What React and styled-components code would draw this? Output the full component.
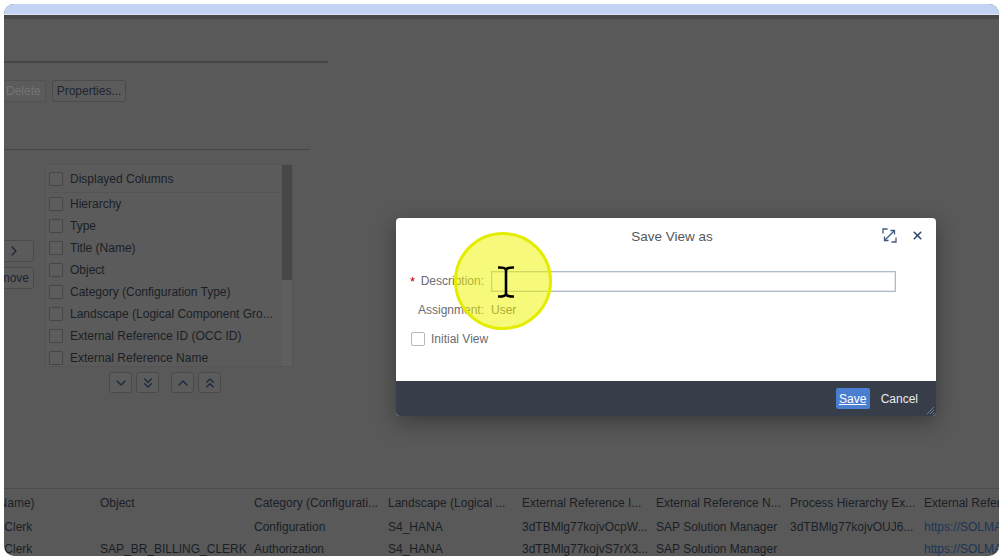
import styled, { createGlobalStyle } from 'styled-components'
import { ChevronDown, ChevronsDown, ChevronUp, ChevronsUp, ChevronRight, X } from 'lucide-react'

const GlobalStyle = createGlobalStyle`
    html, body {
        margin: 0;
        padding: 0;
        background: #ffffff;
    }
    body {
        font-family: "Liberation Sans", Arial, sans-serif;
    }
`

const columns = [
    'Displayed Columns',
]

const listRows = [
    'Hierarchy',
    'Type',
    'Title (Name)',
    'Object',
    'Category (Configuration Type)',
    'Landscape (Logical Component Gro...',
    'External Reference ID (OCC ID)',
    'External Reference Name',
]

const tableHead = [
    'Title (Name)',
    'Object',
    'Category (Configurati...',
    'Landscape (Logical ...',
    'External Reference I...',
    'External Reference N...',
    'Process Hierarchy Ex...',
    'External Reference URL',
]

const tableRows = [
    ['Billing Clerk', '', 'Configuration', 'S4_HANA', '3dTBMlg77kojvOcpW...', 'SAP Solution Manager', '3dTBMlg77kojvOUJ6...', 'https://SOLMAN/sap'],
    ['Billing Clerk', 'SAP_BR_BILLING_CLERK', 'Authorization', 'S4_HANA', '3dTBMlg77kojvS7rX3...', 'SAP Solution Manager', '', 'https://SOLMAN/sap'],
]

export default function App() {
    return (
        <>
            <GlobalStyle />
            <Frame>
                <BrowserStrip />
                <Stage>
                    <ShellBand />
                    <Rule $width={324} $top={42} $thick={2} />
                    <Toolbar>
                        <PageButton $disabled>Delete</PageButton>
                        <PageButton>Properties...</PageButton>
                    </Toolbar>
                    <Rule $width={306} $top={47} $thick={1} />

                    <MainRow>
                        <MoveColumn>
                            <PageButton $wide><ChevronRight size={16} strokeWidth={1.8} /></PageButton>
                            <PageButton>Remove</PageButton>
                        </MoveColumn>
                        <ListBox>
                            <ListInner>
                                {columns.map((c) => (
                                    <ListHeader key={c}>
                                        <BoxCell><PageCheck /></BoxCell>
                                        <span>{c}</span>
                                    </ListHeader>
                                ))}
                                {listRows.map((r) => (
                                    <ListRow key={r}>
                                        <BoxCell><PageCheck /></BoxCell>
                                        <span>{r}</span>
                                    </ListRow>
                                ))}
                            </ListInner>
                            <ScrollTrack>
                                <ScrollThumb />
                            </ScrollTrack>
                        </ListBox>
                    </MainRow>

                    <ArrowRow>
                        <ArrowGroup>
                            <ArrowButton><ChevronDown size={16} strokeWidth={2} /></ArrowButton>
                            <ArrowButton><ChevronsDown size={16} strokeWidth={2} /></ArrowButton>
                        </ArrowGroup>
                        <ArrowGroup>
                            <ArrowButton><ChevronUp size={16} strokeWidth={2} /></ArrowButton>
                            <ArrowButton><ChevronsUp size={16} strokeWidth={2} /></ArrowButton>
                        </ArrowGroup>
                    </ArrowRow>

                    <Table>
                        <TRow $head>
                            {tableHead.map((h) => <Cell key={h}>{h}</Cell>)}
                        </TRow>
                        {tableRows.map((row, i) => (
                            <TRow key={i}>
                                {row.map((v, j) => (
                                    <Cell key={j} $link={v.startsWith('https')}>{v}</Cell>
                                ))}
                            </TRow>
                        ))}
                    </Table>

                    {/* modal dialog */}
                    <Dialog>
                        <DialogHeader>
                            <DialogTitle>Save View as</DialogTitle>
                            <HeaderIcons>
                                <IconButton>
                                    <svg width="15" height="15" viewBox="0 0 15 15" fill="none" stroke="#3d5a7e" strokeWidth="1.3">
                                        <path d="M1 5.5V1H5.5" />
                                        <path d="M14 9.5V14H9.5" />
                                        <path d="M3 12L12 3" />
                                        <path d="M8.5 2.5H12.5V6.5" />
                                        <path d="M2.5 8.5V12.5H6.5" />
                                    </svg>
                                </IconButton>
                                <IconButton>
                                    <X size={13} strokeWidth={3} color="#2b4a72" />
                                </IconButton>
                            </HeaderIcons>
                        </DialogHeader>

                        <DialogBody>
                            <FormGrid>
                                <Label><Required>*</Required>Description:</Label>
                                <Input />
                                <Label>Assignment:</Label>
                                <Value>User</Value>
                            </FormGrid>
                            <CheckLine>
                                <DialogCheck />
                                <span>Initial View</span>
                            </CheckLine>
                        </DialogBody>

                        <DialogFooter>
                            <SaveButton><u>Save</u></SaveButton>
                            <CancelButton>Cancel</CancelButton>
                        </DialogFooter>
                        <ResizeGrip width="9" height="9" viewBox="0 0 9 9" stroke="#5f7fa3" strokeWidth="1">
                            <path d="M8 1L1 8M8 4L4 8M8 7L7 8" />
                        </ResizeGrip>
                    </Dialog>

                    <Highlight />
                    <Cursor width="20" height="34" viewBox="0 0 20 34" fill="none" stroke="#000" strokeWidth="2.6">
                        <path d="M2 2.5C6 2.5 9 2.2 10 4.8C11 2.2 14 2.5 18 2.5" />
                        <path d="M10 4.8V29.2" />
                        <path d="M2 31.5C6 31.5 9 31.8 10 29.2C11 31.8 14 31.5 18 31.5" />
                    </Cursor>
                </Stage>
            </Frame>
        </>
    )
}

const Frame = styled.div`
    margin: 4px 5px 4px 4px;
    height: 552px;
    border-radius: 10px;
    overflow: hidden;
    display: flex;
    flex-direction: column;
    background: #595959;
`

const BrowserStrip = styled.div`
    flex-shrink: 0;
    height: 10px;
    background: #c3d3f3;
    border-bottom: 1px solid #dfe6ef;
`

const Stage = styled.div`
    position: relative;
    flex: 1;
    overflow: hidden;
    display: flex;
    flex-direction: column;
    font-size: 12px;
    color: #1a1f27;
`

const ShellBand = styled.div`
    flex-shrink: 0;
    height: 4px;
    background: #484848;
`

const Rule = styled.div`
    flex-shrink: 0;
    width: ${(props) => props.$width}px;
    height: ${(props) => props.$thick}px;
    margin-top: ${(props) => props.$top}px;
    background: #464646;
`

const Toolbar = styled.div`
    display: flex;
    gap: 6px;
    margin: 17px 0 0 -3px;
`

const PageButton = styled.div`
    display: flex;
    align-items: center;
    justify-content: center;
    box-sizing: border-box;
    height: 22px;
    min-width: ${(props) => props.$wide ? '40px' : 'auto'};
    padding: 0 4px;
    border: 1px solid ${(props) => props.$disabled ? '#525252' : '#4a4a4a'};
    border-radius: 3px;
    background: #5b5b5b;
    color: ${(props) => props.$disabled ? '#747474' : '#1b2432'};
    white-space: nowrap;
`

const MainRow = styled.div`
    display: flex;
    margin-top: 14px;
    height: 203px;
`

const MoveColumn = styled.div`
    width: 30px;
    margin-right: 11px;
    display: flex;
    flex-direction: column;
    align-items: flex-end;
    gap: 5px;
    padding-top: 76px;

    & > div {
        flex-shrink: 0;
    }
`

const ListBox = styled.div`
    display: flex;
    box-sizing: border-box;
    width: 248px;
    height: 203px;
    border: 1px solid #555555;
    background: #5b5b5b;
`

const ListInner = styled.div`
    flex: 1;
    overflow: hidden;
`

const ListHeader = styled.div`
    display: flex;
    align-items: center;
    height: 27px;
    border-bottom: 1px solid #555555;
    white-space: nowrap;
`

const ListRow = styled.div`
    display: flex;
    align-items: center;
    height: 22px;
    white-space: nowrap;
`

const BoxCell = styled.div`
    box-sizing: border-box;
    width: 24px;
    padding-left: 3px;
    display: flex;
    justify-content: flex-start;
`

const PageCheck = styled.span`
    display: block;
    width: 12px;
    height: 12px;
    border: 1px solid #464646;
    border-radius: 1px;
    background: #5d5d5d;
`

const ScrollTrack = styled.div`
    width: 10px;
    background: #5e5e5e;
`

const ScrollThumb = styled.div`
    height: 115px;
    background: #474747;
`

const ArrowRow = styled.div`
    display: flex;
    gap: 12px;
    margin: 5px 0 0 105px;
`

const ArrowGroup = styled.div`
    display: flex;
    gap: 4px;
`

const ArrowButton = styled.div`
    display: flex;
    align-items: center;
    justify-content: center;
    box-sizing: border-box;
    width: 23px;
    height: 21px;
    border: 1px solid #4a4a4a;
    border-radius: 3px;
    background: #5c5c5c;
    color: #1c2a3c;
`

const Table = styled.div`
    flex-shrink: 0;
    margin: 95px 0 0 -40px;
    border-top: 1px solid #4d4d4d;
`

const TRow = styled.div`
    display: grid;
    grid-template-columns: 131px 154px repeat(6, 134px);
    align-items: center;
    height: ${(props) => props.$head ? '27px' : '22px'};
`

const Cell = styled.div`
    padding-left: 5px;
    overflow: hidden;
    white-space: nowrap;
    color: ${(props) => props.$link ? '#1a3656' : '#1a1f27'};
`

const Dialog = styled.div`
    position: absolute;
    left: 392px;
    top: 203px;
    width: 540px;
    height: 198px;
    display: flex;
    flex-direction: column;
    border-radius: 4px;
    overflow: hidden;
    background: #ffffff;
    box-shadow: 0 6px 22px rgba(0, 0, 0, 0.35);
`

const DialogHeader = styled.div`
    position: relative;
    height: 36px;
    display: flex;
    align-items: center;
    justify-content: center;
`

const DialogTitle = styled.div`
    font-size: 13.5px;
    color: #54585d;
    margin-left: 12px;
`

const HeaderIcons = styled.div`
    position: absolute;
    right: 12px;
    top: 10px;
    display: flex;
    align-items: center;
    gap: 14px;
`

const IconButton = styled.div`
    display: flex;
    align-items: center;
    justify-content: center;
`

const DialogBody = styled.div`
    flex: 1;
    padding: 17px 0 0 15px;
`

const FormGrid = styled.div`
    display: grid;
    grid-template-columns: 73px 405px;
    grid-template-rows: 21px 18px;
    column-gap: 7px;
    row-gap: 9px;
    align-items: center;
`

const Label = styled.div`
    display: flex;
    justify-content: flex-end;
    color: #6a6d70;
    font-size: 12px;
`

const Required = styled.span`
    margin-right: auto;
    margin-left: -1px;
    color: #bb0000;
    font-size: 13px;
`

const Input = styled.div`
    box-sizing: border-box;
    height: 21px;
    border: 1px solid #aebacb;
    box-shadow: inset 0 0 0 1px #e4e9f0;
    background: #ffffff;
`

const Value = styled.div`
    color: #5f6368;
    font-size: 12px;
`

const CheckLine = styled.div`
    display: flex;
    align-items: center;
    gap: 6px;
    margin-top: 13px;
    color: #6a6d70;
    font-size: 12px;
`

const DialogCheck = styled.span`
    display: block;
    box-sizing: border-box;
    width: 14px;
    height: 14px;
    border: 1px solid #b3b8bf;
    border-radius: 2px;
`

const DialogFooter = styled.div`
    height: 35px;
    display: flex;
    align-items: center;
    justify-content: flex-end;
    gap: 9px;
    padding-right: 16px;
    background: #373d49;
`

const SaveButton = styled.div`
    display: flex;
    align-items: center;
    justify-content: center;
    width: 34px;
    height: 21px;
    border-radius: 2px;
    background: #4a7ed0;
    color: #ffffff;
    font-size: 12px;
`

const CancelButton = styled.div`
    padding: 0 2px;
    color: #e8ecf1;
    font-size: 12px;
`

const ResizeGrip = styled.svg`
    position: absolute;
    right: 1px;
    bottom: 1px;
`

const Highlight = styled.div`
    position: absolute;
    left: 450px;
    top: 217px;
    width: 98px;
    height: 98px;
    box-sizing: border-box;
    border-radius: 50%;
    border: 3px solid #e4ec00;
    background: rgba(240, 243, 0, 0.52);
`

const Cursor = styled.svg`
    position: absolute;
    left: 492px;
    top: 250px;
`
